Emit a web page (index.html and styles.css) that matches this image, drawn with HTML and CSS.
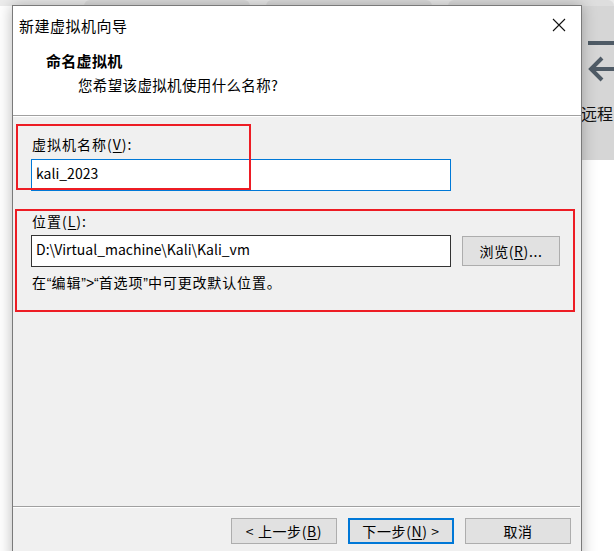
FILE: index.html
```html
<!DOCTYPE html>
<html lang="zh-CN">
<head>
<meta charset="utf-8">
<title>新建虚拟机向导</title>
<link rel="stylesheet" href="styles.css">
</head>
<body>
<div class="backdrop">
  <div class="tabstrip">
    <span class="tab t1"></span><span class="tab t2"></span><span class="tab t3"></span>
  </div>
  <div class="sideapp">
    <div class="bar"></div>
    <svg class="arrow" width="40" height="30" viewBox="0 0 40 30"><path d="M40 15 H8 M18 4 L7 15 L18 26" fill="none" stroke="#4f5b66" stroke-width="4"/></svg>
    <div class="remote">远程</div>
  </div>
</div>

<div class="dialog">
  <div class="titlebar">
    <span class="title">新建虚拟机向导</span>
    <svg class="close" width="14" height="14" viewBox="0 0 14 14"><path d="M1 1 L13 13 M13 1 L1 13" stroke="#111" stroke-width="1.1" fill="none"/></svg>
  </div>
  <div class="header">
    <div class="h1">命名虚拟机</div>
    <div class="h2">您希望该虚拟机使用什么名称?</div>
  </div>
  <div class="sep"></div>
  <div class="body">
    <div class="label l1">虚拟机名称(<u>V</u>):</div>
    <div class="input focus">kali_2023</div>
    <div class="label l2">位置(<u>L</u>):</div>
    <div class="row">
      <div class="input path">D:\Virtual_machine\Kali\Kali_vm</div>
      <div class="btn browse">浏览(<u>R</u>)...</div>
    </div>
    <div class="hint">在<span class="q">“</span>编辑<span class="q">”&gt;“</span>首选项<span class="q">”</span>中可更改默认位置。</div>
    <div class="mark m1"></div>
    <div class="mark m2"></div>
  </div>
  <div class="sep bottomsep"></div>
  <div class="footer">
    <div class="btn">&lt; 上一步(<u>B</u>)</div>
    <div class="btn default">下一步(<u>N</u>) &gt;</div>
    <div class="btn">取消</div>
  </div>
</div>
</body>
</html>
```
FILE: styles.css
```css
html, body {
  margin: 0;
  height: 100%;
  overflow: hidden;
}
body {
  background: #ffffff;
  font-family: "Microsoft YaHei", "Noto Sans CJK SC", sans-serif;
  color: #000;
  padding: 5px 0 0 12px;
  box-sizing: border-box;
  position: relative;
}
.backdrop {
  position: absolute;
  inset: 0;
}
.tabstrip {
  height: 6px;
  background: #ececec;
  display: flex;
  gap: 16px;
  padding-left: 84px;
}
.tab {
  width: 178px;
  height: 6px;
  background: #dedede;
  border-radius: 6px 6px 0 0;
}
.sideapp {
  position: absolute;
  left: 582px;
  top: 6px;
  width: 32px;
  height: 154px;
  background: #d6d6d6;
  overflow: hidden;
}
.bar {
  position: absolute;
  left: 6px;
  top: 35px;
  width: 40px;
  height: 4px;
  background: #4f5b66;
}
.arrow {
  position: absolute;
  left: 2px;
  top: 48px;
}
.remote {
  position: absolute;
  left: -1px;
  top: 95px;
  font-size: 16px;
  white-space: nowrap;
  color: #111;
}
.dialog {
  position: relative;
  width: 570px;
  height: 560px;
  border: 1px solid #7a7a7a;
  box-sizing: border-box;
  background: #f0f0f0;
  box-shadow: 0 0 14px rgba(0,0,0,0.28);
  display: flex;
  flex-direction: column;
}
.titlebar {
  height: 38px;
  background: #fff;
  display: flex;
  align-items: center;
  justify-content: space-between;
  padding: 0 15px 0 6px;
}
.title {
  font-size: 15px;
  letter-spacing: 0.5px;
}
.header {
  height: 71px;
  background: #fff;
  padding-left: 33px;
  box-sizing: border-box;
}
.h1 {
  font-size: 15px;
  font-weight: bold;
  line-height: 20px;
  padding-top: 7px;
  letter-spacing: 0.3px;
}
.h2 {
  font-size: 14.5px;
  line-height: 20px;
  padding-top: 4px;
  padding-left: 32px;
  letter-spacing: 0.35px;
}
.sep {
  height: 1px;
  background: #a0a0a0;
  border-bottom: 1px solid #fff;
}
.body {
  position: relative;
  flex: 0 0 auto;
  height: 389px;
  padding: 0 0 0 18px;
  box-sizing: border-box;
  font-size: 14px;
}
.label {
  line-height: 20px;
  letter-spacing: 1px;
}
.l1 { padding-top: 17px; padding-left: 1px; }
.l2 { padding-top: 20px; padding-left: 1px; }
u { text-decoration-thickness: 1px; text-underline-offset: 2px; }
.input {
  width: 420px;
  height: 32px;
  box-sizing: border-box;
  background: #fff;
  border: 1px solid #333;
  padding-left: 4px;
  line-height: 26px;
  font-size: 14px;
  margin-top: 5px;
}
.input.focus {
  border-color: #0078d7;
}
.row {
  display: flex;
  align-items: center;
  gap: 11px;
  margin-top: 4px;
}
.row .input { margin-top: 0; }
.btn {
  height: 26px;
  width: 106px;
  box-sizing: border-box;
  background: #e1e1e1;
  border: 1px solid #adadad;
  display: flex;
  align-items: center;
  justify-content: center;
  font-size: 14px;
  letter-spacing: 0.6px;
}
.browse {
  width: 98px;
  height: 30px;
}
.hint {
  padding-top: 5px;
  line-height: 20px;
  padding-left: 1px;
  letter-spacing: 0.85px;
}
.q {
  font-family: "Liberation Sans", sans-serif;
  letter-spacing: 0;
}
.mark {
  position: absolute;
  border: 2px solid #ed1c24;
  box-sizing: border-box;
}
.m1 { left: 3px; top: 7px; width: 235px; height: 66px; }
.m2 { left: 2px; top: 92px; width: 560px; height: 103px; }
.bottomsep {
  margin-right: 1px;
}
.footer {
  display: flex;
  justify-content: flex-end;
  gap: 11px;
  padding: 10px 10px 0 0;
}
.btn.default {
  border: 2px solid #0078d7;
}
```
